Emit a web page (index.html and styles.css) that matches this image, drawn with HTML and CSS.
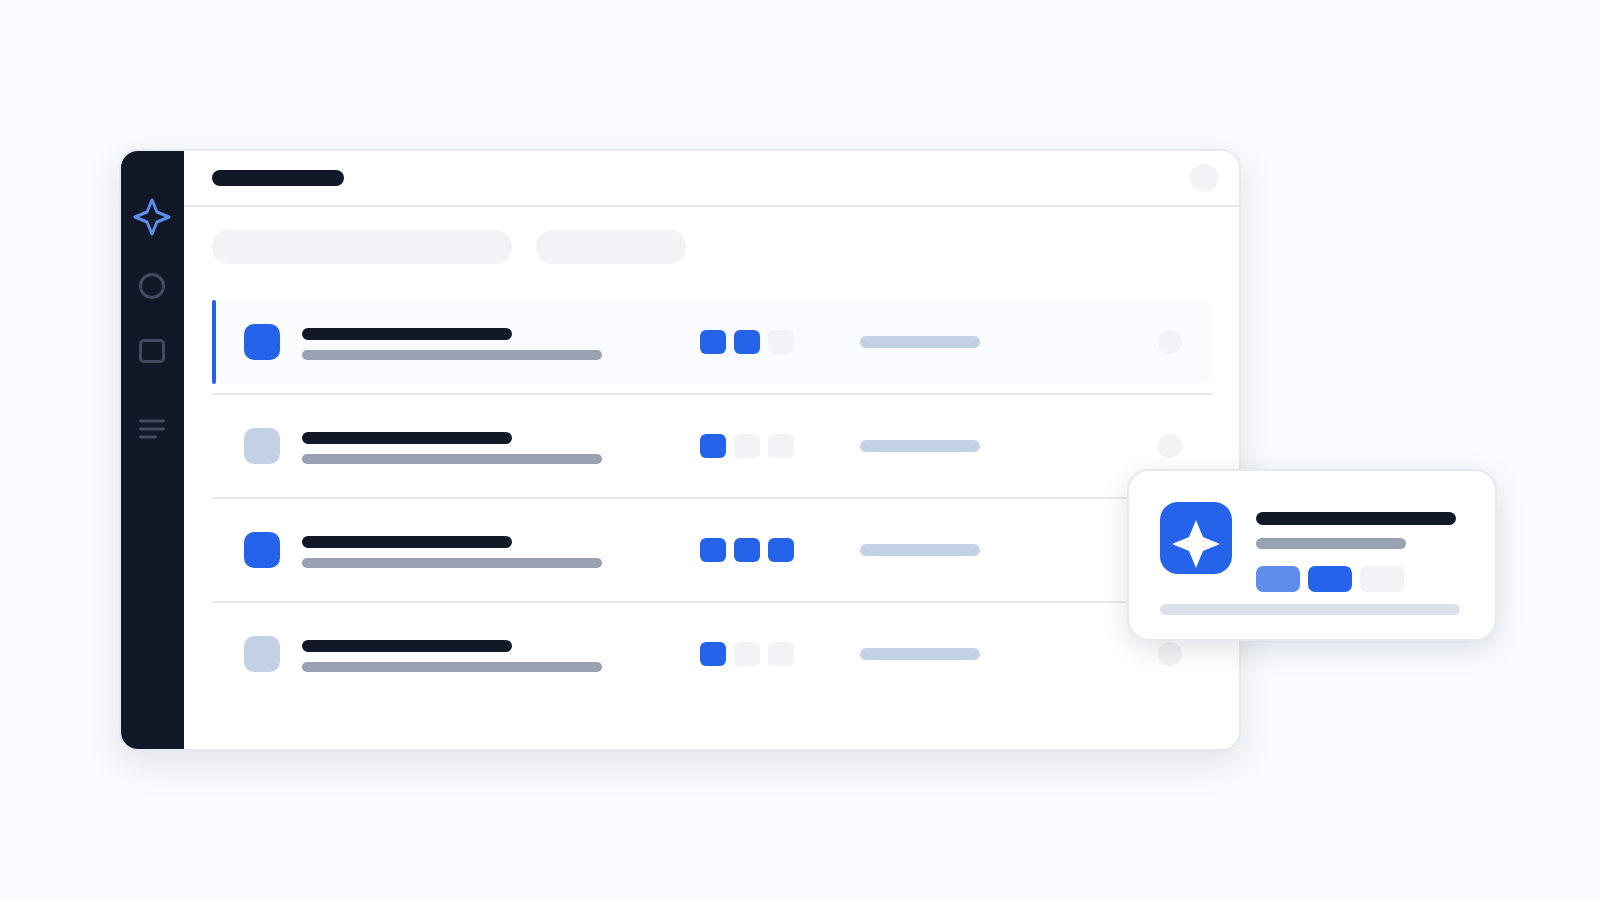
FILE: index.html
```html
<!DOCTYPE html>
<html lang="en">
<head>
<meta charset="utf-8">
<meta name="viewport" content="width=device-width, initial-scale=1">
<title>App preview</title>
<link rel="stylesheet" href="styles.css">
</head>
<body>
<main class="stage">
  <div class="scene">
    <section class="window">
      <aside class="sidebar">
        <svg class="nav-star" viewBox="0 0 40 40" aria-hidden="true"><path d="M20 3L25 15L37 20L25 25L20 37L15 25L3 20L15 15Z"/></svg>
        <svg class="nav-icon" viewBox="0 0 26 26" aria-hidden="true"><circle cx="13" cy="13" r="11.5"/></svg>
        <svg class="nav-icon" viewBox="0 0 26 26" aria-hidden="true"><rect x="1.5" y="2.5" width="23" height="21" rx="3.5"/></svg>
        <svg class="nav-icon nav-lines" viewBox="0 0 26 26" aria-hidden="true"><path d="M1.5 5H24.5M1.5 13H24.5M1.5 21H16.5"/></svg>
      </aside>
      <div class="content">
        <header class="header">
          <span class="title"></span>
          <span class="avatar"></span>
        </header>
        <div class="filters">
          <span class="pill pill-wide"></span>
          <span class="pill"></span>
        </div>
        <ul class="list">
          <li class="row selected">
            <span class="thumb on"></span>
            <div class="lines"><span class="line-main"></span><span class="line-sub"></span></div>
            <div class="chips"><span class="chip on"></span><span class="chip on"></span><span class="chip"></span></div>
            <div class="meta"><span class="meta-bar"></span><span class="dot"></span></div>
          </li>
          <li class="row">
            <span class="thumb"></span>
            <div class="lines"><span class="line-main"></span><span class="line-sub"></span></div>
            <div class="chips"><span class="chip on"></span><span class="chip"></span><span class="chip"></span></div>
            <div class="meta"><span class="meta-bar"></span><span class="dot"></span></div>
          </li>
          <li class="row">
            <span class="thumb on"></span>
            <div class="lines"><span class="line-main"></span><span class="line-sub"></span></div>
            <div class="chips"><span class="chip on"></span><span class="chip on"></span><span class="chip on"></span></div>
            <div class="meta"><span class="meta-bar"></span><span class="dot"></span></div>
          </li>
          <li class="row">
            <span class="thumb"></span>
            <div class="lines"><span class="line-main"></span><span class="line-sub"></span></div>
            <div class="chips"><span class="chip on"></span><span class="chip"></span><span class="chip"></span></div>
            <div class="meta"><span class="meta-bar"></span><span class="dot"></span></div>
          </li>
        </ul>
      </div>
    </section>
    <section class="card">
      <div class="card-top">
        <div class="card-icon">
          <svg viewBox="0 0 48 48" aria-hidden="true"><path d="M24 0L31 17L48 24L31 31L24 48L17 31L0 24L17 17Z"/></svg>
        </div>
        <div class="card-lines">
          <span class="card-title"></span>
          <span class="card-sub"></span>
          <div class="card-chips"><span class="tag light"></span><span class="tag on"></span><span class="tag"></span></div>
        </div>
      </div>
      <div class="card-bar"></div>
    </section>
  </div>
</main>
</body>
</html>
```
FILE: styles.css
```css
:root {
  --ink: #111827;
  --blue: #2563eb;
  --blue-light: #5f8dee;
  --muted: #99a2b3;
  --pale: #c3d1e4;
  --fill: #f2f3f7;
  --line: #e5e9f0;
  --page: #f9fbfe;
}

* {
  box-sizing: border-box;
}

body {
  margin: 0;
  background: var(--page);
  font-family: Inter, sans-serif;
}

.stage {
  min-height: 100vh;
  display: flex;
  align-items: center;
  padding: 24px 103px 24px 119px;
}

.scene {
  position: relative;
  flex: 1;
  padding-right: 256px;
}

.window {
  display: flex;
  isolation: isolate;
  overflow: hidden;
  background: #fff;
  border: 2px solid var(--line);
  border-radius: 19px;
  box-shadow: 0 12px 36px rgba(30, 41, 69, 0.12);
}

.sidebar {
  flex: none;
  width: 63px;
  display: flex;
  flex-direction: column;
  align-items: center;
  padding: 46px 1px 0 0;
  background: var(--ink);
}

.sidebar svg {
  fill: none;
  stroke-width: 3;
  stroke-linecap: round;
  stroke-linejoin: round;
}

.nav-star {
  width: 40px;
  height: 40px;
  stroke: var(--blue-light);
}

.nav-icon {
  width: 26px;
  height: 26px;
  margin-top: 39px;
  stroke: #404c61;
}

.nav-star + .nav-icon {
  margin-top: 36px;
}

.sidebar .nav-lines {
  margin-top: 52px;
}

.content {
  flex: 1;
  min-width: 0;
  padding-bottom: 42px;
}

.header {
  display: flex;
  align-items: center;
  justify-content: space-between;
  padding: 13px 21px 13px 28px;
  border-bottom: 2px solid var(--line);
}

.title {
  width: 132px;
  height: 16px;
  border-radius: 8px;
  background: var(--ink);
}

.avatar {
  width: 28px;
  height: 28px;
  border-radius: 50%;
  background: var(--fill);
}

.filters {
  display: flex;
  gap: 24px;
  padding: 23px 28px 27px;
}

.pill {
  width: 150px;
  height: 34px;
  border-radius: 17px;
  background: var(--fill);
}

.pill-wide {
  width: 300px;
}

.list {
  list-style: none;
  margin: 0;
  padding: 0 27px 0 28px;
}

.row {
  position: relative;
  display: grid;
  grid-template-columns: 58px 398fr 160fr 322fr;
  align-items: center;
  height: 104px;
  padding: 0 30px 0 32px;
  border-bottom: 2px solid var(--line);
}

.row:last-child {
  border-bottom-color: transparent;
}

.row > * {
  z-index: 1;
}

.selected::before,
.selected::after {
  content: "";
  position: absolute;
  top: 9px;
  bottom: 9px;
  left: 0;
}

.selected::before {
  right: 0;
  z-index: 0;
  border-radius: 14px;
  background: var(--page);
}

.selected::after {
  width: 4px;
  border-radius: 2px;
  background: var(--blue);
}

.thumb {
  width: 36px;
  height: 36px;
  border-radius: 10px;
  background: var(--pale);
}

.lines {
  display: flex;
  flex-direction: column;
  gap: 10px;
  padding-top: 4px;
}

.line-main {
  width: 210px;
  height: 12px;
  border-radius: 6px;
  background: var(--ink);
}

.line-sub {
  width: 300px;
  height: 10px;
  border-radius: 5px;
  background: var(--muted);
}

.chips,
.card-chips {
  display: flex;
  gap: 8px;
}

.chip {
  width: 26px;
  height: 24px;
  border-radius: 6px;
  background: var(--fill);
}

.meta {
  display: flex;
  align-items: center;
  justify-content: space-between;
}

.meta-bar {
  width: 120px;
  height: 12px;
  border-radius: 6px;
  background: var(--pale);
}

.dot {
  width: 24px;
  height: 24px;
  border-radius: 50%;
  background: var(--fill);
}

/* Floating detail card over the window's right edge */
.card {
  position: absolute;
  z-index: 2;
  right: 0;
  bottom: 110px;
  width: 370px;
  padding: 31px 35px 24px 31px;
  background: #fff;
  border: 2px solid var(--line);
  border-radius: 22px;
  box-shadow: 0 8px 28px rgba(30, 41, 69, 0.14);
}

.card-top {
  display: flex;
  gap: 24px;
}

.card-icon {
  width: 72px;
  height: 72px;
  display: flex;
  align-items: flex-end;
  justify-content: center;
  padding-bottom: 6px;
  border-radius: 18px;
  background: var(--blue);
}

.card-icon svg {
  width: 48px;
  height: 48px;
  fill: #fff;
}

.card-lines {
  display: flex;
  flex-direction: column;
  padding-top: 10px;
}

.card-title {
  width: 200px;
  height: 13px;
  border-radius: 7px;
  background: var(--ink);
}

.card-sub {
  width: 150px;
  height: 11px;
  margin: 13px 0 17px;
  border-radius: 6px;
  background: var(--muted);
}

.tag {
  width: 44px;
  height: 26px;
  border-radius: 7px;
  background: var(--fill);
}

.card-bar {
  height: 11px;
  margin-top: 12px;
  border-radius: 6px;
  background: #dbe2ec;
}

.thumb.on,
.chip.on,
.tag.on {
  background: var(--blue);
}

.tag.light {
  background: var(--blue-light);
}
```
